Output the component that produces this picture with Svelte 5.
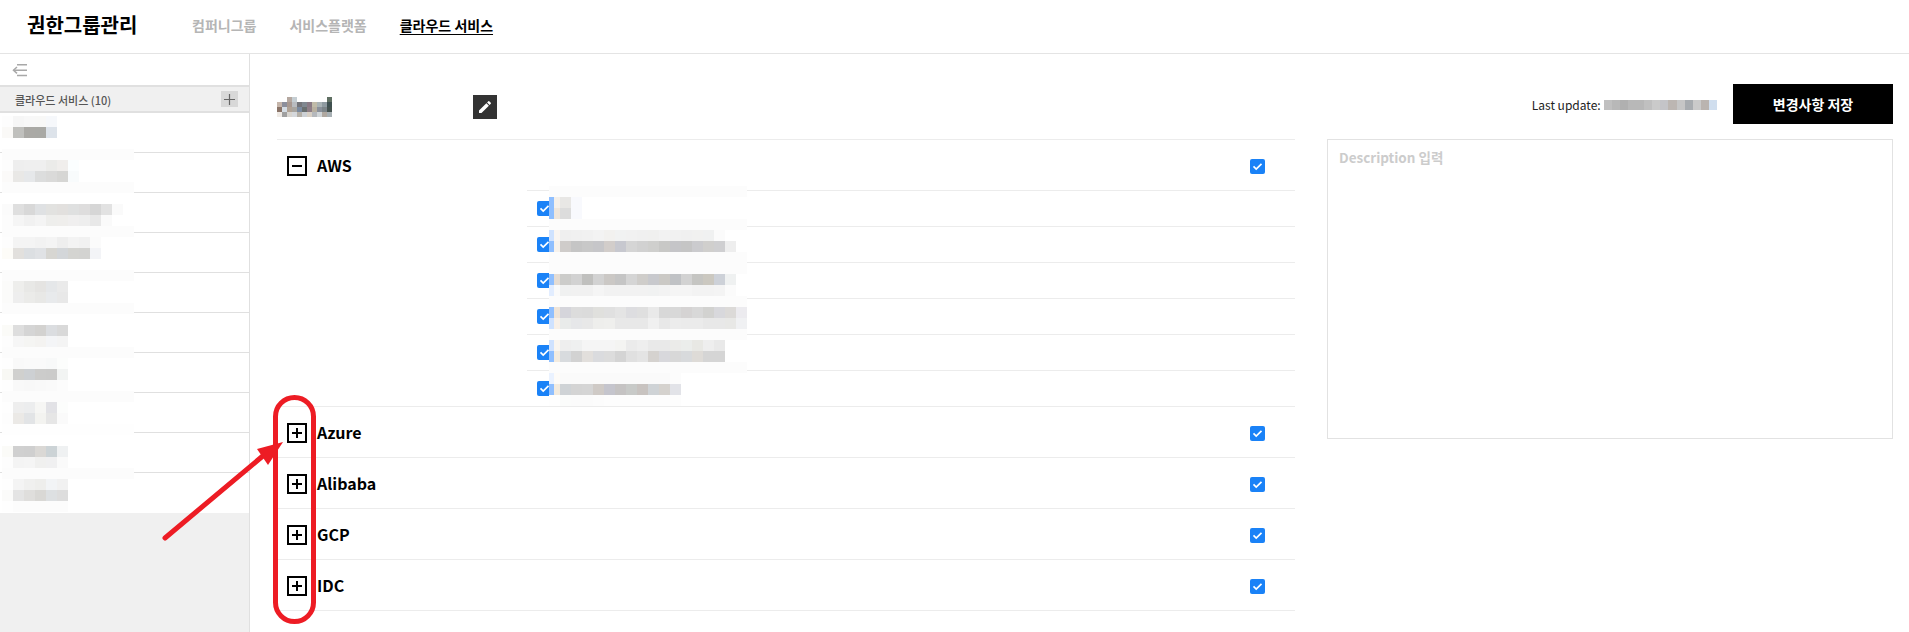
<script>
    const H = Array(12).fill("fcfcfc").join(" ");
    const P = Array(12).fill("fefefe").join(" ");
    const SH = Array(19).fill("fcfcfc").join(" ");

    // redacted names, drawn as the mosaic cells of the screenshot
    const sideRows = [
        { y: 3, rows: ["fdfdfd f6f6f6 f8f8f8 f8f8f7 f6f8fb", "faf9f7 c0c0bd aaa9a5 a9a9a5 dde3ea"] },
        { y: -4, rows: [H, "fdfdfd eeeeee efefef efefef ebebe9 f0eeec fbfeff", "fbfaf9 e9e8e6 e6e8ea dcdddd dadad9 d6d6d4 f8fbfc", H] },
        { y: 11, rows: ["fbfbfb dfdfdf d8d8d8 dfe1e3 e2e2e0 e2e0de dfe0e0 dedddd d6d6d6 e2e2e2 fafafa", "fcfcfc f5f5f5 f1f1f1 f4f4f4 eeeeec efeeec f0efef eeeeee e8e8e8 fafafa", H] },
        { y: 4, rows: ["fdfdfd f4f4f4 f4f4f4 f2f2f2 f4f4f4 eeeeee f3f3f3 f1f1f1 fbfbfb", "fdfcf8 e2e0dd dcdfe2 e0e2e5 d7d6d2 d3d6d9 d4d4d1 d3d3d1 f3f4f7"] },
        { y: -3, rows: [H, "fbfbfa eeeeec e8e8e6 e5e4e2 e5e7e9 eaeaea", "fbfbfa eeeeee ebebe9 e8e8e6 e8eaec e8e8e8", H] },
        { y: 12, rows: ["fbfbf8 dedede d5d5d5 d3d2d0 dbdde0 d9d9d9", "fdfdfd f6f6f6 f5f5f3 f4f3f1 f4f5f7 f4f4f4", H] },
        { y: 5, rows: ["fefefe f9f9f9 fafafa fafafa f8f9f9 fcfdfc", "f8f8f4 d0d0ce cdd0d3 cccccb cbcbca f2f4f3", "fefefe f9f9f9 f8f8f8 f9f9f9 fafafa fcfcfc"] },
        { y: -2, rows: [H, "fefefe eeeeee ecedee f6f6f4 e2e2e6 fcfdfc", "fdfdfd ebe9e6 e2e4e6 f3f3f0 e6e6e6 fafafa", P] },
        { y: 13, rows: ["fbfbf8 d0d0d0 cfcfcf dad8d5 ccd3d6 eff1f2", "fdfdfd f4f4f4 f5f5f5 f0f0ef f0f0f1 fafafa", H] },
        { y: 6, rows: ["fefefe f4f4f4 f0f0ef eeeeec f2f4f6 f1f1f1", "fbfbfa e4e4e4 dfdedc d9d8d5 dde0e2 dddddd", "fefefe fcfcfc fcfcfc fcfcfc fcfcfc fcfcfc"] },
    ];

    const awsRows = [
        { y: -5, rows: [SH, "8fbfff f5f0ea e8e7e5 f8f9fd", "8fbfff efe6dc dcdcdc f8f9fd", SH] },
        { y: 3, rows: ["cfe2ff f9f5f2 efefef f0f0f0 f1f1f1 f3f3f3 f2f1ef f1f2f2 f1f1f1 f0f0f0 f0f0ef f2f2f2 f1f1f1 f0f0f0 f1f1f0 f0f1f1 fbfbfb", "8fbfff f7f2ec cfccca c5c5c5 c8c8c8 c6c6c9 d2cdca c7c8cf d5d5d5 d1d1d1 cfcfcd c8c8c6 c5c5c8 c5c5c5 cbcbce d0cfcd cfcfd1 eeeeee", SH] },
        { y: 0, rows: [SH, "8fbfff e5dcd3 ccccca d2d2d2 c0c0be d2d2d2 cbc8c5 c5c5c5 d5d5d5 cfcdca c8c9cd cbc9c5 c0c2c5 d2d2d2 c5c5c2 cbc8c0 cdd1d8 eff1f1", "e2edff fafafa f0f1f1 f1f1f1 f1f1f1 f5f5f5 f2f2f2 f2f2f2 f2f2f2 f2f2f2 f1f2f2 f3f3f3 f5f5f5 f5f5f5 f3f3f3 f3f3f3 f4f4f4 fbfbfb"] },
        { y: -3, rows: [SH, "8fbfff efe4d8 d5d5db dcdcdc dbdbdb e0e0dd e0e0e0 e4e4e4 dddde0 dfdfdf e9e9e9 d8d8d8 d8d8d8 d5d3d3 d8d8d8 d2d2d0 d8d8dc dcdad8 ecebef", "cfe2ff f8f0e8 e9ebea e6e7e9 e8e8e8 eeeeec efefed e8e8e8 e8e8e8 e8e8e8 f0f0f0 e8e8e8 ececec ebebeb ebebeb e8e8e8 e8e8e8 e8e8e6 f0f1f3"] },
        { y: -6, rows: [SH, "cfe2ff f9f5f0 eeeeee eff0f0 f5f5f5 f5f5f5 f5f5f5 f4f4f2 ebebeb eeeeee e9e9e9 e9e9e9 ebebe9 ebedeb e8e8e4 eeeeee e9e9e9", "8fbfff f3ebdf d8dbde d2d2d2 e2dfdc dadbde dcdcdc d4d4d4 e0e0e0 e4e4e4 d5d2cf d8d8dc d8d8d8 d8dadc dedbd7 d5d5d5 d5d5d5", SH] },
        { y: 2, rows: ["eaf2ff fdfbf8 fafafa fafafa fafafa fafafa fafafa fafafa fafafa fafafa fafafa fafafa fcfcfc", "8fbfff f3ebdf cfd3d6 d4d4d4 d5d5d5 cfcac6 c5c5cd c5c3c3 c8cac8 c8c3c0 cfd3d6 d5d2ce e2e3e8", "fefefe fefefe fbfcfb fbfbfb fbfbfb fcfcfc fdfdfd fdfdfd fdfdfd fdfdfd fdfdfd fdfdfd fdfdfd"] },
    ];

    const titleCells = [
        "ffffff ffffff b5a8a0 c5ced3 ffffff ffffff ffffff ffffff ffffff ffffff 5f6f62",
        "c5b5aa 8c8f9c a89890 b9bcc0 74757a 808890 8a7a85 c0bba8 aab3b5 8f9aa0 3f5050",
        "8a7468 d5dde5 b0a295 a8a5a0 7a8aa0 6a7070 8f7f88 b8b0a0 8a909a 7c8488 45524f",
        "efeae5 a0a0a0 d8d5d0 d5d8dc b5b0a8 ccd0d5 d8d0c5 b5b8bc d0d5d8 b0a8a0 a8b0b4",
    ];

    const dateCells = ["c0c0c0 b8b8b8 b0b0b0 b8b8b8 b8b8b8 c0c0c0 cacaca c4c4c8 bcb6b2 c6c6c6 a8acb0 cacaca bab4b0 d0deee"];

    const groups = [
        { name: "AWS", open: true, rows: awsRows },
        { name: "Azure", open: false },
        { name: "Alibaba", open: false },
        { name: "GCP", open: false },
        { name: "IDC", open: false },
    ];

    let open = $state({ AWS: true });
</script>

{#snippet mosaic(rows, y, kind)}
    <div class="mosaic {kind}" style="margin-top: {y}px">
        {#each rows as row}
            <div class="mosaic-row">
                {#each row.split(" ") as c}
                    <i style="background: #{c}"></i>
                {/each}
            </div>
        {/each}
    </div>
{/snippet}

{#snippet check()}
    <span class="check">
        <svg width="11" height="9" viewBox="0 0 11 9" fill="none">
            <path d="M1.5 4.4 L4.2 7 L9.5 1.8" stroke="#fff" stroke-width="1.7" />
        </svg>
    </span>
{/snippet}

<div class="app">
    <header>
        <h1>권한그룹관리</h1>
        <nav>
            <span>컴퍼니그룹</span>
            <span>서비스플랫폼</span>
            <span class="active">클라우드 서비스</span>
        </nav>
    </header>

    <div class="body">
        <aside>
            <div class="toggle">
                <svg width="16" height="13" viewBox="0 0 16 13" fill="none" stroke="#a8a8a8" stroke-width="1.5">
                    <path d="M5 .8 H15 M1.5 6.2 H15 M5 11.6 H15" />
                    <path d="M5 3 L1.5 6.2 L5 9.4" />
                </svg>
            </div>
            <div class="side-head">
                <span>클라우드 서비스 (10)</span>
                <button class="add" aria-label="추가">
                    <svg width="11" height="11" viewBox="0 0 11 11" stroke="#666" stroke-width="1.2">
                        <path d="M5.5 0 V11 M0 5.5 H11" />
                    </svg>
                </button>
            </div>
            <ul>
                {#each sideRows as item}
                    <li>{@render mosaic(item.rows, item.y, "side")}</li>
                {/each}
            </ul>
        </aside>

        <main>
            <div class="top">
                <div class="name">
                    {@render mosaic(titleCells, 0, "title")}
                    <button class="edit" aria-label="편집">
                        <svg width="16" height="16" viewBox="0 0 24 24" fill="#fff">
                            <path d="M3 17.25V21h3.75L17.81 9.94l-3.75-3.75L3 17.25zM20.71 7.04c.39-.39.39-1.02 0-1.41l-2.34-2.34a1 1 0 0 0-1.41 0l-1.83 1.83 3.75 3.75 1.83-1.83z" />
                        </svg>
                    </button>
                </div>
                <div class="update">
                    <span>Last update:</span>
                    {@render mosaic(dateCells, 2, "date")}
                </div>
                <button class="save">변경사항 저장</button>
            </div>

            <div class="columns">
                <div class="list">
                    {#each groups as group}
                        <div class="group">
                            <div class="group-head">
                                <button
                                    class="expand"
                                    aria-label="펼치기"
                                    onclick={() => (open[group.name] = !open[group.name])}
                                >
                                    <svg width="12" height="12" viewBox="0 0 12 12" stroke="#000" stroke-width="2">
                                        <path d="M1 6 H11" />
                                        {#if !open[group.name]}
                                            <path d="M6 1 V11" />
                                        {/if}
                                    </svg>
                                </button>
                                <span class="group-name">{group.name}</span>
                                {@render check()}
                            </div>
                            {#if open[group.name] && group.rows}
                                <div class="subs">
                                    {#each group.rows as sub}
                                        <div class="sub">
                                            {@render check()}
                                            {@render mosaic(sub.rows, sub.y, "sub-cells")}
                                        </div>
                                    {/each}
                                </div>
                            {/if}
                        </div>
                    {/each}
                </div>
                <div class="desc">Description 입력</div>
            </div>
        </main>
    </div>

    <!-- annotation drawn over the screenshot -->
    <svg class="note" width="1909" height="632" viewBox="0 0 1909 632" fill="none">
        <rect x="275.5" y="397.5" width="38" height="224" rx="19" stroke="#ed1c24" stroke-width="5" />
        <path d="M165 538 L264 455" stroke="#ed1c24" stroke-width="5" stroke-linecap="round" />
        <path d="M283 442 L257 449 L268 465 Z" fill="#ed1c24" />
    </svg>
</div>

<style>
    :global(body) {
        margin: 0;
        background: #fff;
    }

    .app {
        position: relative;
        height: 632px;
        overflow: hidden;
        font-family: "Noto Sans CJK KR", "Noto Sans", sans-serif;
        color: #000;
    }

    button {
        padding: 0;
        border: none;
        font-family: inherit;
        cursor: pointer;
    }

    header {
        display: flex;
        align-items: center;
        height: 53px;
        padding-left: 27px;
        border-bottom: 1px solid #e4e4e4;
    }

    h1 {
        margin: 0 0 4px;
        font-size: 20px;
        font-weight: 700;
        line-height: 1;
        width: 165px;
    }

    nav {
        display: flex;
        gap: 33px;
        margin-bottom: 3px;
        font-size: 14px;
        font-weight: 700;
        color: #b5b5b5;
    }

    nav .active {
        color: #000;
        text-decoration: underline;
        text-underline-offset: 3px;
    }

    .body {
        display: flex;
        height: 578px;
    }

    aside {
        width: 249px;
        flex: none;
        background: #f0f0f0;
        border-right: 1px solid #e0e0e0;
    }

    .toggle {
        display: flex;
        align-items: center;
        box-sizing: border-box;
        height: 31px;
        padding: 2px 0 0 12px;
        background: #fff;
    }

    .side-head {
        display: flex;
        align-items: center;
        justify-content: space-between;
        height: 24px;
        padding: 0 11px 0 15px;
        background: #f0f0f0;
        border-top: 2px solid #e0e0e0;
        border-bottom: 2px solid #e0e0e0;
        font-size: 11px;
        font-weight: 500;
        color: #555;
    }

    .side-head span {
        padding-top: 2px;
    }

    .add {
        display: flex;
        align-items: center;
        justify-content: center;
        width: 17px;
        height: 16px;
        background: #d8d8d8;
    }

    ul {
        margin: 0;
        padding: 0;
        list-style: none;
    }

    li {
        display: flow-root;
        height: 39px;
        background: #fff;
        border-bottom: 1px solid #e0e0e0;
    }

    li:last-child {
        border-bottom-color: #fff;
    }

    .mosaic {
        position: relative;
        z-index: 1;
    }

    .mosaic-row {
        display: flex;
    }

    .mosaic i {
        display: block;
        flex: none;
        width: 11px;
        height: 11px;
    }

    .side {
        height: 0;
        margin-left: 2px;
    }

    main {
        flex: 1;
        padding: 0 16px 0 27px;
        min-width: 0;
    }

    .top {
        display: flex;
        align-items: flex-start;
        height: 55px;
        padding-top: 30px;
    }

    .name {
        display: flex;
        align-items: center;
        justify-content: space-between;
        width: 220px;
        height: 24px;
        margin-top: 11px;
        margin-right: auto;
    }

    .title .mosaic-row i {
        width: 5px;
        height: 5px;
    }

    .edit {
        display: flex;
        align-items: center;
        justify-content: center;
        width: 24px;
        height: 24px;
        background: #333;
    }

    .update {
        display: flex;
        align-items: center;
        height: 40px;
        margin-right: 16px;
        font-size: 12px;
        color: #222;
    }

    .date {
        margin-left: 3px;
    }

    .date .mosaic-row i {
        width: 8.1px;
        height: 10px;
    }

    .save {
        width: 160px;
        height: 40px;
        background: #000;
        color: #fff;
        font-size: 14px;
        font-weight: 700;
    }

    .columns {
        display: flex;
        align-items: flex-start;
        gap: 32px;
    }

    .list {
        width: 1018px;
        flex: none;
        border-top: 1px solid #ececec;
    }

    .group {
        border-bottom: 1px solid #ececec;
    }

    .group-head {
        display: flex;
        align-items: center;
        height: 50px;
        padding: 0 30px 0 10px;
    }

    .group-head .expand,
    .group-head .check {
        margin-top: 2px;
    }

    .expand {
        display: flex;
        align-items: center;
        justify-content: center;
        box-sizing: border-box;
        width: 20px;
        height: 20px;
        background: #fff;
        border: 2px solid #000;
    }

    .group-name {
        flex: 1;
        margin-left: 10px;
        font-size: 16px;
        font-weight: 700;
    }

    .check {
        display: flex;
        align-items: center;
        justify-content: center;
        flex: none;
        width: 15px;
        height: 15px;
        border-radius: 2px;
        background: #1a82f7;
    }

    .subs {
        margin-left: 250px;
        border-top: 1px solid #ececec;
    }

    .sub {
        display: flex;
        align-items: center;
        height: 35px;
        padding-left: 10px;
        border-bottom: 1px solid #ececec;
    }

    .sub:last-child {
        border-bottom: none;
    }

    .sub-cells {
        align-self: flex-start;
        height: 0;
        margin-left: -3px;
    }

    .sub-cells .mosaic-row i:nth-child(1) {
        width: 5px;
    }

    .sub-cells .mosaic-row i:nth-child(2) {
        width: 6px;
    }

    .desc {
        flex: 1;
        box-sizing: border-box;
        height: 300px;
        padding: 7px 11px;
        border: 1px solid #e2e2e2;
        font-size: 13.5px;
        font-weight: 700;
        color: #ccc;
    }

    .note {
        position: absolute;
        top: 0;
        left: 0;
        pointer-events: none;
        z-index: 2;
    }
</style>
